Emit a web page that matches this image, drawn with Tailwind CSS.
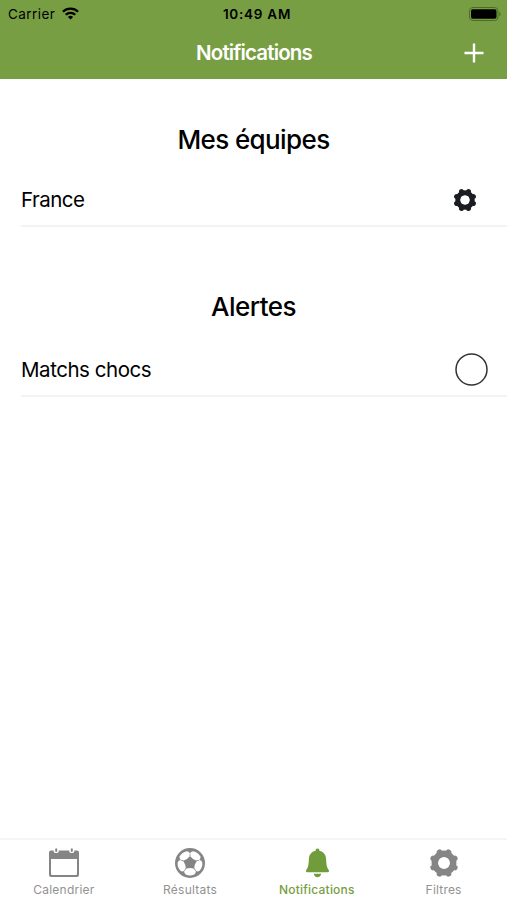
<!DOCTYPE html>
<html lang="fr">
<head>
  <meta charset="utf-8">
  <meta name="viewport" content="width=device-width, initial-scale=1">
  <title>Notifications</title>
  <script src="https://cdn.jsdelivr.net/npm/@tailwindcss/browser@4"></script>
</head>
<body class="bg-white text-black font-[Inter,sans-serif]">
  <div class="flex flex-col h-[900px] w-[507px] overflow-hidden">

    <!-- Header -->
    <header class="h-[79px] shrink-0 bg-[#779e42]">
      <div class="grid grid-cols-3 items-center h-[27px] pl-2 pr-[6px] text-[13.5px]">
        <div class="flex items-center gap-[7px]">
          <span class="pt-[2px] tracking-[0.45px]">Carrier</span>
          <svg class="w-[17px] h-[13px]" viewBox="0 0 17 13" fill="none" stroke="#000" stroke-width="2.2">
            <path d="M.9 4.8a10.8 10.8 0 0 1 15.2 0" />
            <path d="M3.7 7.8a6.8 6.8 0 0 1 9.6 0" />
            <path d="M8.5 12.6 5.9 10a3.7 3.7 0 0 1 5.2 0z" fill="#000" stroke="none" />
          </svg>
        </div>
        <div class="pt-[2px] pl-[5px] text-center font-semibold whitespace-nowrap tracking-[0.75px]">10:49 AM</div>
        <svg class="justify-self-end w-[32px] h-[14px]" viewBox="0 0 32 14">
          <rect x=".5" y=".5" width="28.500" height="13" rx="3.500" fill="none" stroke="#4d6a29" />
          <rect x="2" y="2.300" width="25.500" height="9.400" rx="1.800" fill="#000" />
          <path d="M30.300 4.700c1.600.6 1.600 4 0 4.600z" fill="#4d6a29" />
        </svg>
      </div>
      <div class="grid grid-cols-3 items-center h-[51px] px-[23px] text-white">
        <span></span>
        <h1 class="pt-[2px] pl-[1px] text-center text-[20.5px] font-semibold tracking-[-0.85px]">Notifications</h1>
        <svg class="justify-self-end w-5 h-5" viewBox="0 0 20 20" stroke="#fff" stroke-width="2.400">
          <path d="M10 .5v19M.5 10h19" />
        </svg>
      </div>
    </header>

    <main class="grow">
      <section class="pt-[40px]">
        <h2 class="h-[41px] leading-[41px] text-center text-[26px] font-medium tracking-[-0.6px]">Mes équipes</h2>
        <div class="mt-[13px] ml-[21px] h-[54px] flex items-center justify-between pt-[2px] pr-[30px] border-b-2 border-[#f3f3f3]">
          <span class="text-[20.5px] tracking-[-0.5px]">France</span>
          <svg class="w-[24px] h-[24px]" viewBox="-14.500 -14.500 29 29" fill="none" stroke="#1b1d22">
            <circle r="8.800" stroke-width="6" />
            <path stroke-width="6" stroke-linecap="round" d="M8.300 3.400l1.900.8M3.400 8.300l.8 1.900M-3.400 8.300l-.8 1.900M-8.300 3.400l-1.900.8M-8.300-3.400l-1.900-.8M-3.400-8.300l-.8-1.900M3.400-8.300l.8-1.900M8.300-3.400l1.900-.8" />
          </svg>
        </div>
      </section>

      <section class="pt-[59px]">
        <h2 class="h-[41px] leading-[41px] text-center text-[26px] font-medium tracking-[-0.55px]">Alertes</h2>
        <div class="mt-[16px] ml-[21px] h-[54px] flex items-center justify-between pt-[1px] pr-[19px] border-b-2 border-[#f3f3f3]">
          <span class="pt-[1px] text-[20.5px] tracking-[-0.45px]">Matchs chocs</span>
          <svg class="w-[33px] h-[33px]" viewBox="0 0 33 33" fill="none" stroke="#333" stroke-width="1.500">
            <circle cx="16.500" cy="16.500" r="15.500" />
          </svg>
        </div>
      </section>
    </main>

    <!-- Tab bar -->
    <nav class="h-[62px] shrink-0 grid grid-cols-4 border-t-2 border-[#f5f5f5] text-[12px] text-[#929292]">
      <a class="flex flex-col items-center pt-[8px] pl-[1px]">
        <svg class="w-[30px] h-[30px]" viewBox="0 0 30 30">
          <path fill="#858585" fill-rule="evenodd" d="M2 2.500h2.600a2.600 2.600 0 0 0 5.200 0h10.400a2.600 2.600 0 0 0 5.200 0H28a2 2 0 0 1 2 2V27a2 2 0 0 1-2 2H2a2 2 0 0 1-2-2V4.500a2 2 0 0 1 2-2zM2 11v15a1 1 0 0 0 1 1h24a1 1 0 0 0 1-1V11z" />
          <path stroke="#858585" stroke-width="2" stroke-linecap="round" d="M7.200 1.200v1.800M22.800 1.200v1.800" />
        </svg>
        <span class="mt-[4px] leading-[16px] tracking-[0.25px]">Calendrier</span>
      </a>
      <a class="flex flex-col items-center pt-[8px]">
        <svg class="w-[30px] h-[30px]" viewBox="-15 -15 30 30">
          <circle r="15" fill="#858585" />
          <g fill="#fff">
            <path id="panel" d="M-3.500 5.600Q0 4.600 3.500 5.600L5.800 8.300Q6 10.200 4.300 11.500 0 13.500-4.300 11.500-6 10.200-5.800 8.300z" />
            <use href="#panel" transform="rotate(72)" />
            <use href="#panel" transform="rotate(144)" />
            <use href="#panel" transform="rotate(216)" />
            <use href="#panel" transform="rotate(288)" />
          </g>
        </svg>
        <span class="mt-[4px] leading-[16px] tracking-[0.25px]">Résultats</span>
      </a>
      <a class="flex flex-col items-center pt-[8px] text-[#779e42]">
        <svg class="w-[30px] h-[30px]" viewBox="0 0 30 30" fill="#709c3b">
          <path d="M15.500.6c1.300 0 1.900.8 1.900 2.100 4.300 1 6.500 4 6.700 8.300.3 6 .7 8.300 2.600 11 .8 1.100.2 2.200-1 2.200H5.300c-1.200 0-1.800-1.100-1-2.200 1.900-2.700 2.300-5 2.600-11 .2-4.300 2.400-7.300 6.700-8.300 0-1.300.6-2.100 1.900-2.100z" />
          <path d="M11.800 25.800h7.400c-.4 2.100-1.700 3.400-3.700 3.400s-3.300-1.300-3.700-3.400z" />
        </svg>
        <span class="mt-[4px] leading-[16px] tracking-[0.2px] font-medium">Notifications</span>
      </a>
      <a class="flex flex-col items-center pt-[8px]">
        <svg class="w-[30px] h-[30px]" viewBox="-15 -15 30 30" fill="none" stroke="#858585">
          <circle r="9.200" stroke-width="6.400" />
          <path stroke-width="5.600" stroke-linecap="round" d="M8.300 3.400l2.500 1.100M3.400 8.300l1.100 2.500M-3.400 8.300l-1.100 2.500M-8.300 3.400l-2.500 1.100M-8.300-3.400l-2.500-1.100M-3.400-8.300l-1.100-2.500M3.400-8.300l1.100-2.500M8.300-3.400l2.500-1.100" />
        </svg>
        <span class="mt-[4px] leading-[16px] tracking-[0.2px]">Filtres</span>
      </a>
    </nav>
  </div>
</body>
</html>
